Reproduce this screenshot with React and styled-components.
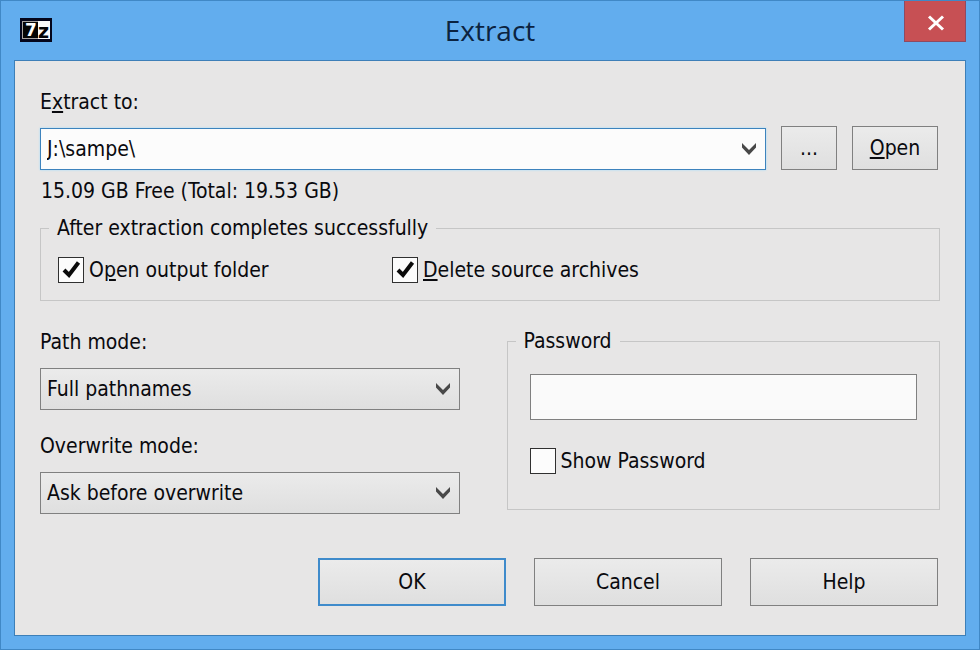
import React, { useState } from 'react'
import styled, { createGlobalStyle } from 'styled-components'

const GlobalStyle = createGlobalStyle`
  * {
    box-sizing: border-box;
  }

  body {
    margin: 0;
    background: #62adee;
    color: #0a0a0e;
    font-family: 'DejaVu Sans Condensed', 'DejaVu Sans', sans-serif;
    font-size: 21px;
    line-height: 26px;
  }

  button,
  input,
  select {
    margin: 0;
    color: inherit;
    font: inherit;
  }
`

const Window = styled.div`
  display: flex;
  flex-direction: column;
  min-height: 100vh;
  border: 1px solid #4088c6;
  background: #62adee;
`

const TitleBar = styled.header`
  display: grid;
  grid-template-columns: 1fr auto 1fr;
  height: 59px;
  padding: 0 13px;
`

const AppIcon = styled.svg`
  width: 32px;
  height: 24px;
  margin: 17px 0 0 6px;
`

const Title = styled.h1`
  margin: 0;
  color: #0b2340;
  font-family: 'Open Sans', 'Noto Sans', sans-serif;
  font-size: 28px;
  font-weight: 400;
  line-height: 58px;
`

const CloseButton = styled.button`
  display: flex;
  justify-content: center;
  align-items: center;
  justify-self: end;
  width: 62px;
  height: 41px;
  padding: 4px 0 0 2px;
  border: 1px solid #8e4a62;
  border-top: 0;
  background: #c75054;
`

const Client = styled.main`
  flex: 1;
  margin: 0 13px 13px;
  padding: 28px 25px;
  border: 1px solid #3d7fb8;
  background: #e7e6e6;
`

const Label = styled.label`
  display: block;
  margin-bottom: ${({ $gap }) => $gap}px;
`

const PathRow = styled.div`
  display: grid;
  grid-template-columns: 1fr 56px 86px;
  column-gap: 15px;
  align-items: end;
  padding-right: 2px;
`

const SelectBox = styled.div`
  position: relative;
`

const Select = styled.select`
  display: block;
  appearance: none;
  width: 100%;
  height: 42px;
  padding: 0 40px 0 6px;
  border: 1px solid ${({ $active }) => ($active ? '#3d83bd' : '#808080')};
  border-radius: 0;
  background: ${({ $active }) =>
    $active ? '#fcfcfc' : 'linear-gradient(#ebebeb, #dfdfdf)'};
  box-shadow: ${({ $active }) => ($active ? '0 0 2px #9fdcff' : 'none')};
  outline: none;
`

const Chevron = styled.svg`
  position: absolute;
  top: 14px;
  right: 9px;
  width: 16px;
  height: 14px;
  pointer-events: none;
`

const Button = styled.button`
  height: ${({ $height }) => $height}px;
  padding: 0;
  border: ${({ $default }) => ($default ? '2px solid #3f8bcb' : '1px solid #808080')};
  border-radius: 0;
  background: linear-gradient(#ebebeb, #dfdfdf);
`

const FreeSpace = styled.p`
  margin: 8px 0 12px;
  padding-left: 1px;
`

const Group = styled.fieldset`
  min-width: 0;
  margin: 0;
  padding: 0;
  border: 1px solid #c6c6c6;
`

const Legend = styled.legend`
  margin-left: 8px;
  padding: 0 8px;
  line-height: 24px;
`

const CheckRow = styled.div`
  display: grid;
  grid-template-columns: 334px 1fr;
  padding: 17px;
`

const PasswordFields = styled.div`
  display: grid;
  row-gap: 28px;
  padding: 21px 22px 35px;
`

const PasswordInput = styled.input`
  width: 100%;
  height: 46px;
  padding: 0 6px;
  border: 1px solid #808080;
  background: #fafafa;
  outline: none;
`

const CheckLabel = styled.label`
  display: flex;
  align-items: center;
  gap: 5px;
  height: 26px;
`

const CheckBox = styled.span`
  position: relative;
  width: 26px;
  height: 26px;
`

const CheckInput = styled.input`
  display: block;
  appearance: none;
  width: 26px;
  height: 26px;
  border: 1px solid #303030;
  background: #fcfcfc;
`

const CheckMark = styled.svg`
  position: absolute;
  top: 0;
  left: 0;
  width: 26px;
  height: 26px;
  pointer-events: none;
`

const Columns = styled.div`
  display: grid;
  grid-template-columns: 420fr 434fr;
  column-gap: 47px;
  align-items: start;
  margin: 28px 0 44px;
`

const Modes = styled.div`
  display: flex;
  flex-direction: column;
  gap: 23px;
`

const Actions = styled.footer`
  display: grid;
  grid-template-columns: repeat(3, 188px);
  column-gap: 28px;
  justify-content: end;
  padding-right: 2px;
`

const pathModes = ['Full pathnames', 'No pathnames', 'Absolute pathnames']
const overwriteModes = [
  'Ask before overwrite',
  'Overwrite without prompt',
  'Skip existing files'
]

function DropDown({ id, options, active }) {
  return (
    <SelectBox>
      <Select id={id} $active={active}>
        {options.map(option => (
          <option key={option}>{option}</option>
        ))}
      </Select>
      <Chevron viewBox="0 0 16 14" aria-hidden="true">
        <path d="M1 1 L8 8 L15 1 V5.5 L8 13 L1 5.5 Z" fill="#484848" />
      </Chevron>
    </SelectBox>
  )
}

function Check({ initial, children }) {
  const [checked, setChecked] = useState(initial)
  return (
    <CheckLabel>
      <CheckBox>
        <CheckInput
          type="checkbox"
          checked={checked}
          onChange={event => setChecked(event.target.checked)}
        />
        {checked && (
          <CheckMark viewBox="0 0 26 26" aria-hidden="true">
            <path
              d="M6 13 L11 18 L20.5 5.5"
              fill="none"
              stroke="#0a0a0a"
              strokeWidth="4"
            />
          </CheckMark>
        )}
      </CheckBox>
      <span>{children}</span>
    </CheckLabel>
  )
}

export default function App() {
  return (
    <>
      <GlobalStyle />
      <Window>
        <TitleBar>
          <AppIcon viewBox="0 0 32 24" aria-hidden="true">
            <rect width="32" height="24" fill="#04061c" />
            <rect x="2" y="3" width="28" height="18" fill="#a9a4a2" />
            <rect x="3" y="4" width="15" height="16" fill="#050505" />
            <rect x="18" y="3" width="12" height="18" fill="#fafafa" />
            <text
              x="5"
              y="18"
              fill="#fff"
              fontFamily="DejaVu Sans"
              fontSize="17"
              fontWeight="700"
            >
              7
            </text>
            <text
              x="18"
              y="20"
              fill="#050505"
              fontFamily="DejaVu Sans"
              fontSize="19"
              fontWeight="700"
            >
              z
            </text>
          </AppIcon>
          <Title>Extract</Title>
          <CloseButton type="button" aria-label="Close">
            <svg width="18" height="16" viewBox="0 0 18 16">
              <path
                d="M2 1.5 L16 14.5 M16 1.5 L2 14.5"
                stroke="#fff"
                strokeWidth="3"
              />
            </svg>
          </CloseButton>
        </TitleBar>
        <Client>
          <Label htmlFor="target" $gap={11}>
            E<u>x</u>tract to:
          </Label>
          <PathRow>
            <DropDown id="target" options={['J:\\sampe\\']} active />
            <Button type="button" $height={44}>
              ...
            </Button>
            <Button type="button" $height={44}>
              <u>O</u>pen
            </Button>
          </PathRow>
          <FreeSpace>15.09 GB Free (Total: 19.53 GB)</FreeSpace>
          <Group>
            <Legend>After extraction completes successfully</Legend>
            <CheckRow>
              <Check initial={true}>
                O<u>p</u>en output folder
              </Check>
              <Check initial={true}>
                <u>D</u>elete source archives
              </Check>
            </CheckRow>
          </Group>
          <Columns>
            <Modes>
              <div>
                <Label htmlFor="path-mode" $gap={13}>
                  Path mode:
                </Label>
                <DropDown id="path-mode" options={pathModes} />
              </div>
              <div>
                <Label htmlFor="overwrite-mode" $gap={13}>
                  Overwrite mode:
                </Label>
                <DropDown id="overwrite-mode" options={overwriteModes} />
              </div>
            </Modes>
            <Group>
              <Legend>Password</Legend>
              <PasswordFields>
                <PasswordInput type="password" aria-label="Password" />
                <Check initial={false}>Show Password</Check>
              </PasswordFields>
            </Group>
          </Columns>
          <Actions>
            <Button type="button" $height={48} $default>
              OK
            </Button>
            <Button type="button" $height={48}>
              Cancel
            </Button>
            <Button type="button" $height={48}>
              Help
            </Button>
          </Actions>
        </Client>
      </Window>
    </>
  )
}
